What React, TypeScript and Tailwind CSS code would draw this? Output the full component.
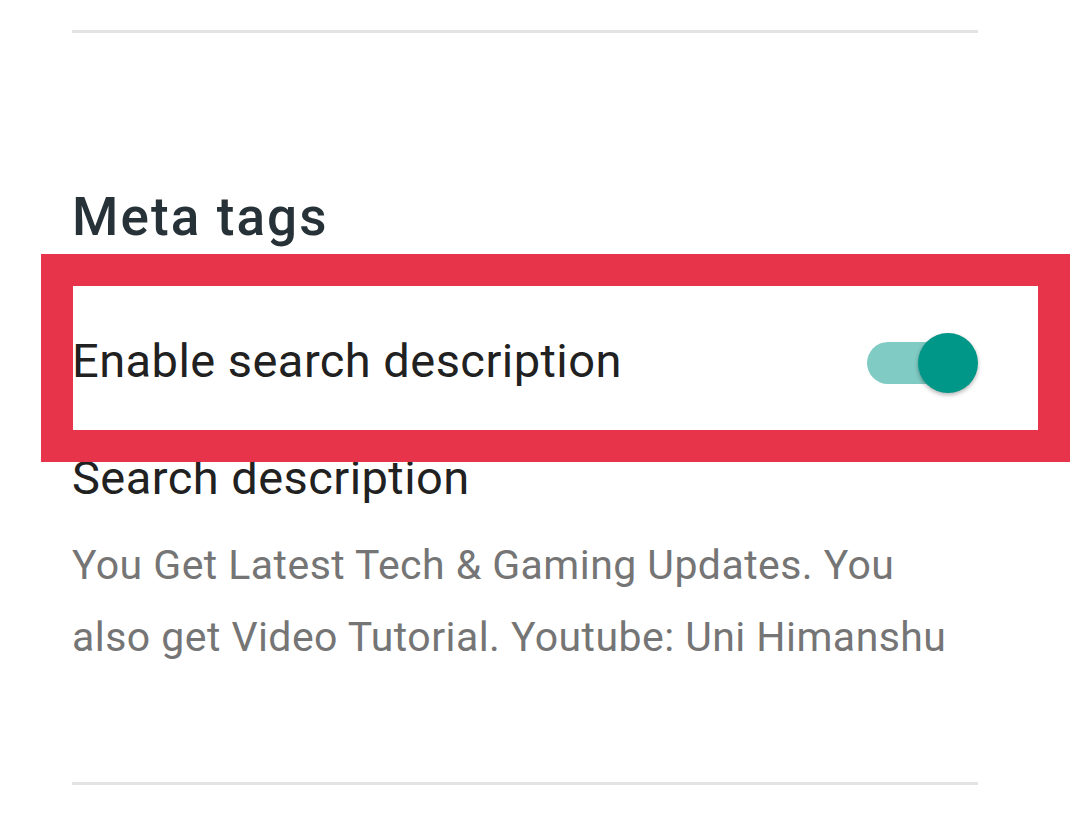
import type { ReactNode } from 'react'

function Divider({ className = '' }: { className?: string }) {
  return <div className={`h-[3px] w-full bg-[#e3e3e3] ${className}`} />
}

function Toggle({ on }: { on: boolean }) {
  return (
    <div className="relative mt-[4px] flex h-[60px] w-[112px] shrink-0 items-center">
      <div className={`ml-[1px] h-[42px] w-[100px] rounded-full ${on ? 'bg-[#80cbc4]' : 'bg-[#bdbdbd]'}`} />
      <div
        className={`absolute top-0 h-[60px] w-[60px] rounded-full shadow-[0_2px_4px_rgba(0,0,0,0.3)] ${
          on ? 'right-0 bg-[#009688]' : 'left-0 bg-[#fafafa]'
        }`}
      />
    </div>
  )
}

// рамка-аннотация поверх строки
function Highlight({ children }: { children: ReactNode }) {
  return (
    <div className="relative">
      <div className="pointer-events-none absolute -left-[31px] -right-[92px] -top-[32px] -bottom-[32px] border-[32px] border-[#e8344a]" />
      {children}
    </div>
  )
}

export default function App() {
  return (
    <div className="h-[815px] w-full overflow-hidden bg-white font-['Roboto',sans-serif]">
      <div className="ml-[72px] w-[906px]">
        <Divider className="mt-[30px]" />

        <h2 className="mt-[153px] text-[53px] leading-[62px] font-medium tracking-[2.1px] text-[#263238]">
          Meta tags
        </h2>

        <div className="mt-[38px]">
          <Highlight>
            <div className="flex h-[144px] items-center justify-between pt-[6px]">
              <span className="text-[47px] leading-[54px] text-[#212121] tracking-[0.45px]">Enable search description</span>
              <Toggle on />
            </div>
          </Highlight>
        </div>

        <div className="mt-[21px] text-[47px] leading-[54px] text-[#212121] tracking-[0.45px]">Search description</div>

        <p className="mt-[24px] text-[41px] leading-[72px] text-[#757575] tracking-[0.45px]">
          You Get Latest Tech &amp; Gaming Updates. You
          <br />
          also get Video Tutorial. Youtube: Uni Himanshu
        </p>

        <Divider className="mt-[109px]" />
      </div>
    </div>
  )
}
